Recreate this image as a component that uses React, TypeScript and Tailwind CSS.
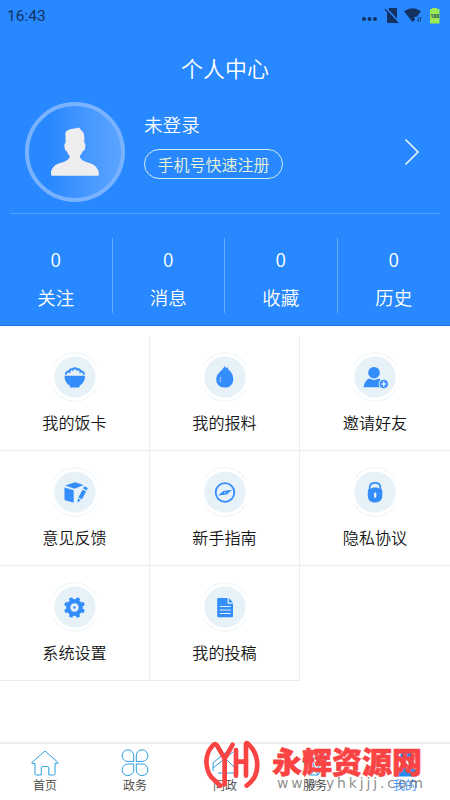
import React from "react";

type Item = { label: string; icon: React.ReactNode };

const B = "#338dfb";

const stats = ["关注", "消息", "收藏", "历史"];

const items: Item[] = [
  {
    label: "我的饭卡",
    icon: (
      <g>
        <path d="M16 22.6C15.6 20.2 17.5 19 19.4 19.8C19.3 17.6 21 16.8 22.4 17.7C23.2 15.6 26.6 15.6 27.4 17.7C28.8 16.8 30.5 17.6 30.4 19.8C32.3 19 34.2 20.2 33.8 22.6" fill="none" stroke={B} strokeWidth="2" />
        <path d="M14.5 23.8H35C35 28.7 32.5 32.3 29.5 33.8V35.5H20V33.8C17 32.3 14.5 28.7 14.5 23.8Z" fill={B} />
      </g>
    ),
  },
  {
    label: "我的报料",
    icon: (
      <g>
        <path d="M25 35.5C19.5 35.5 16.3 32 16.3 27.5C16.3 23 19 20.8 21.3 18.5C22.8 17 23.8 15.8 24.6 14L26 16L27.8 15.3L28.2 17.5C31 19.5 33.3 23 33.3 27.2C33.3 32.2 30 35.5 25 35.5Z" fill={B} />
        <path d="M21 24.8C19.8 26.3 19.8 28.6 20.8 30.2" fill="none" stroke="#b5d7fb" strokeWidth="1" />
      </g>
    ),
  },
  {
    label: "邀请好友",
    icon: (
      <g fill={B}>
        <circle cx="24" cy="20.7" r="5.8" />
        <path d="M13.5 35.2C14.2 30.5 16.5 27.5 19.5 26.5C22.2 28.4 26 28.4 28.7 26.5L31 28V35.2Z" />
        <circle cx="33.8" cy="32" r="5.2" fill="#e6f1f8" />
        <circle cx="33.8" cy="32" r="4.3" />
        <path d="M31.1 32H36.5M33.8 29.3V34.7" stroke="#fff" strokeWidth="1.2" />
      </g>
    ),
  },
  {
    label: "意见反馈",
    icon: (
      <g fill={B}>
        <path d="M15.2 18.6L25 15.2L33.6 18.1L24.5 21.8Z" />
        <path d="M14.5 20.5L23.7 23.2V35.7L14.5 33Z" />
        <path d="M34.2 19.3L37.8 21.1L36.7 23.4L33.1 21.6ZM32.5 22.7L36.1 24.5L32 32.2L28.4 30.4ZM27.9 31.5L30.8 33L27.5 35.5Z" />
      </g>
    ),
  },
  {
    label: "新手指南",
    icon: (
      <g>
        <circle cx="25" cy="25.5" r="9.3" fill="none" stroke={B} strokeWidth="1.8" />
        <path d="M18 28.4L23.4 24L32 22.8L26.8 27.5Z" fill={B} />
        <circle cx="25" cy="25.7" r=".8" fill="#e6f1f8" />
      </g>
    ),
  },
  {
    label: "隐私协议",
    icon: (
      <g>
        <path d="M19.7 25V20.5C19.7 17.7 21.8 15.9 25 15.9S30.3 17.7 30.3 20.5V25" fill="none" stroke={B} strokeWidth="1.7" />
        <path d="M17.8 24Q17.8 21.8 20.3 21.7C22.8 20.2 27.2 20.2 29.7 21.7Q32.3 21.8 32.3 24V28.5C32.3 33 29.5 35.6 25 35.6S17.8 33 17.8 28.5Z" fill={B} />
        <rect x="24" y="25.4" width="2.3" height="5.4" rx="1" fill="#e6f1f8" />
      </g>
    ),
  },
  {
    label: "系统设置",
    icon: (
      <g>
        <circle cx="24.5" cy="25.5" r="6.3" fill="none" stroke={B} strokeWidth="4.2" />
        {[22.5, 67.5, 112.5, 157.5, 202.5, 247.5, 292.5, 337.5].map((a) => (
          <rect key={a} x="22.6" y="15" width="3.8" height="4" rx="0.8" fill={B} transform={`rotate(${a} 24.5 25.5)`} />
        ))}
        <circle cx="24.5" cy="25.5" r="1.3" fill={B} />
      </g>
    ),
  },
  {
    label: "我的投稿",
    icon: (
      <g>
        <path d="M17.2 17.2Q17.2 16 18.4 16H27.5V21.8H33V34Q33 35.2 31.8 35.2H18.4Q17.2 35.2 17.2 34Z" fill={B} />
        <path d="M28.8 16L33 20.5H28.8Z" fill={B} />
        <path d="M19.7 24.5H30.7M19.7 28H30.7M19.7 31.5H30.7" stroke="#e6f1f8" strokeWidth="1" />
      </g>
    ),
  },
];

const tabs: Item[] = [
  {
    label: "首页",
    icon: <path d="M1.8 13.6L15 2L28.2 13.6Q28.6 14.4 27.4 14.4H25V24.5Q25 26 23.5 26H18.8V18.8Q18.8 17.6 17.7 17.6H12.5Q11.3 17.6 11.3 18.8V26H6.5Q5 26 5 24.5V14.4H2.6Q1.4 14.4 1.8 13.6Z" />,
  },
  {
    label: "政务",
    icon: (
      <g>
        {[0, 90, 180, 270].map((a) => (
          <path key={a} d="M13.7 12.4H7.4A5.8 5.8 0 1 1 13.7 6.4Z" transform={`rotate(${a} 15 13.7)`} />
        ))}
      </g>
    ),
  },
  {
    label: "问政",
    icon: <path d="M3 14L16 3M3 19L23 3M8 24H28M3 14V22M14 8L26 20" />,
  },
  {
    label: "服务",
    icon: <path d="M8 3H23L27 10L18 26H10L3 12ZM8 3L18 26M3 12L21 7M10 26L27 10" />,
  },
  {
    label: "我的",
    icon: (
      <g fill="#258bf3" stroke="none">
        <circle cx="17" cy="8.5" r="7" />
        <path d="M13.5 14H20.5V18L27 21.5V27.5H5V21.5L13.5 18Z" />
        <path d="M17 9L19 15L17 22L15 15Z" fill="#fff" />
      </g>
    ),
  },
];

function StatusBar() {
  return (
    <div className="flex h-8 items-center justify-between pl-[7px] pr-[9px] text-[#143261]">
      <span className="font-['Roboto',sans-serif] text-[15.5px] font-normal leading-8">16:43</span>
      <svg width="80" height="20" viewBox="0 0 80 20" fill="currentColor">
        <circle cx="3" cy="13" r="2" />
        <circle cx="8.5" cy="13" r="2" />
        <circle cx="14" cy="13" r="2" />
        <path d="M28.5 2H36V17H27Q26 17 26 16V4.5Z" />
        <path d="M25.5 2.6L38.5 16.6" stroke="#2788ff" strokeWidth="1.6" />
        <path d="M24 3.2L36.8 17" stroke="currentColor" strokeWidth="1.3" />
        <path d="M43 5.2Q51.5-.8 60 5.2L56 10.8L53 11L54 13.8L51.5 16Z" />
        <path d="M57.4 11V15.5M56.3 14L57.4 15.5M59.4 15.5V11M60.4 12.5L59.4 11" stroke="currentColor" strokeWidth=".8" fill="none" />
        <path d="M71 2H76V3H78.5V17.5H69V3H71Z" fill="#9de953" />
        <text x="73.8" y="11.6" textAnchor="middle" fontSize="5" fontWeight="700" fontFamily="Roboto, sans-serif">100</text>
      </svg>
    </div>
  );
}

function Watermark() {
  return (
    <div className="pointer-events-none absolute left-[203px] top-[738px]">
      <svg width="226" height="56" viewBox="0 0 226 56">
        <g transform="scale(.3333) translate(-9 -24)" fill="none" stroke="#fa4444" strokeWidth="14" strokeLinecap="round" strokeLinejoin="round">
          <path d="M74 163V86L52 48Q45 37 37 48C10 78 15 130 46 153L61 167" />
          <path d="M74 86L98 44" />
          <path d="M108 60V137M108 95H138" />
          <path d="M138 137V42Q140 36 148 45C180 78 182 138 140 167" />
        </g>
        <text x="69" y="34.5" textLength="150" lengthAdjust="spacingAndGlyphs" fontSize="30" fontWeight="900" fontFamily="'Noto Sans CJK SC', sans-serif" fill="#fa4444" stroke="#fa4444" strokeWidth=".6">永辉资源网</text>
        <text x="74" y="49.5" textLength="146" fontSize="14" fontWeight="400" fontFamily="'DejaVu Sans', sans-serif" fill="#666" fillOpacity=".75">www.yhkjjj.com</text>
      </svg>
    </div>
  );
}

export default function App() {
  return (
    <div className="relative flex h-[800px] w-[450px] flex-col overflow-hidden bg-white font-['Noto_Sans_CJK_SC',sans-serif] font-[350] text-[#161616]">
      <header className="h-[326px] border-b border-[#1c76e4] bg-[#2788ff] text-white">
        <StatusBar />
        <h1 className="mt-[19px] text-center text-[22px] font-[350] leading-8">个人中心</h1>
        <div className="mx-[10px] mt-[18px] flex h-[113px] border-b border-white/20 pl-[15px] pr-5">
          <div className="mt-[1px] size-[100px] shrink-0 rounded-full border-4 border-[#79b3ff] bg-linear-to-r from-[#2788ff] from-20% to-[#5ca4ff]">
            <svg width="92" height="92" viewBox="0 0 92 92" fill="#eeeef0">
              <path d="M37 25.5Q40 22.8 46 22.5L50 21.5L52 24Q55.3 26 55.3 31V37Q57 37 56.2 41Q56 44.7 54 45Q52.7 48 51 49.5V51.5Q53 55 60.5 57Q70 60 69.8 68.5Q69.8 69.8 68.5 69.8H23.3Q22 69.8 22 68.5Q21.3 60 31 57Q38.5 55 40.5 51.5V49.5Q38.7 48 37.7 45Q35.7 44.5 35.5 41Q35 37.5 36.5 37V31Q36 27 37 25.5Z" />
            </svg>
          </div>
          <div className="ml-[19px] flex-1">
            <div className="mt-[9px] text-[18.6px] leading-[28px]">未登录</div>
            <button className="mt-[11px] flex h-[30px] w-[139px] items-center justify-center rounded-full border border-[#d5ecee] pb-px text-[16px] leading-none text-[#edf5d7]">手机号快速注册</button>
          </div>
          <svg className="mt-[37px]" width="16" height="28" viewBox="0 0 16 28" fill="none" stroke="#e5f1ff" strokeWidth="1.7" strokeLinecap="round">
            <path d="M2 2L14 14L2 26" />
          </svg>
        </div>
        <div className="mt-6 grid h-[75px] grid-cols-4">
          {stats.map((s, i) => (
            <div key={s} className={`flex flex-col items-center ${i < 3 ? "border-r border-white/30" : ""}`}>
              <span className="mt-[7px] text-[19px] leading-7">0</span>
              <span className="mt-[10px] text-[18.5px] leading-7">{s}</span>
            </div>
          ))}
        </div>
      </header>

      <main className="mt-[10px] grid w-[450px] grid-cols-3">
        {items.map((it, i) => (
          <div key={it.label} className={`flex h-[115px] flex-col items-center border-b border-[#ededed] ${i % 3 < 2 ? "border-r" : ""}`}>
            <svg className="mt-[15.5px]" width="50" height="50" viewBox="0 0 50 50">
              <circle cx="25" cy="25" r="24.3" fill="none" stroke="#e9f4fa" strokeWidth="1" strokeDasharray="52 24.34" strokeDashoffset="26" transform="rotate(-90 25 25)" />
              <circle cx="25" cy="25" r="20.6" fill="#e6f1f8" />
              {it.icon}
            </svg>
            <span className="mt-[8.5px] text-[16.1px] leading-6">{it.label}</span>
          </div>
        ))}
      </main>

      <nav className="mt-auto grid h-[58px] grid-cols-5 border-t-2 border-[#eee]">
        {tabs.map((t, i) => (
          <div key={t.label} className="flex flex-col items-center">
            <svg className="mt-[5px]" width="30" height="28" viewBox="0 0 30 28" fill="none" stroke="#289ee0" strokeWidth="1">
              {t.icon}
            </svg>
            <span className={`text-[12px] leading-4 ${i === 4 ? "text-[#2788ff]" : "text-[#444]"}`}>{t.label}</span>
          </div>
        ))}
      </nav>
      <Watermark />
    </div>
  );
}
